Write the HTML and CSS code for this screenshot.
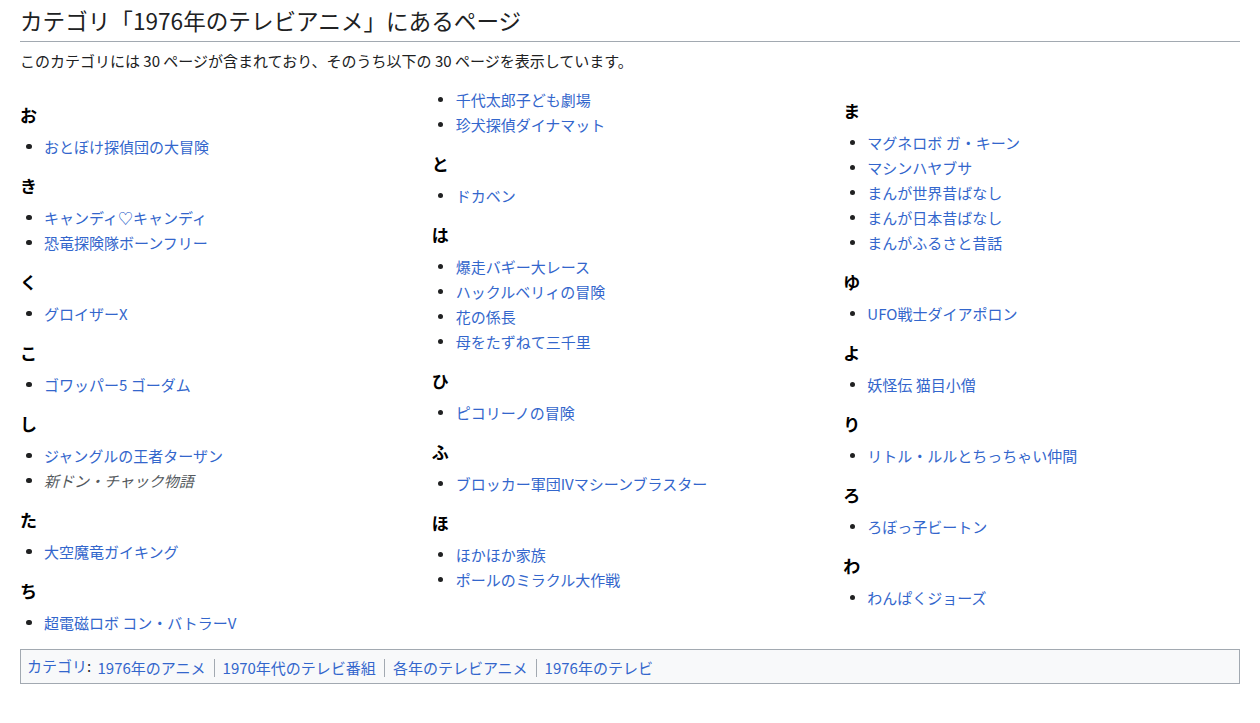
FILE: index.html
```html
<!DOCTYPE html>
<html lang="ja">
<head>
<meta charset="utf-8">
<title>カテゴリ「1976年のテレビアニメ」にあるページ</title>
<link rel="stylesheet" href="styles.css">
</head>
<body>
<div class="page">
  <h1 class="title">カテゴリ「1976年のテレビアニメ」にあるページ</h1>
  <p class="summary">このカテゴリには 30 ページが含まれており、そのうち以下の 30 ページを表示しています。</p>
  <div class="cols">
    <div class="col col1">
      <h3>お</h3>
      <ul><li><a href="#">おとぼけ探偵団の大冒険</a></li></ul>
      <h3>き</h3>
      <ul><li><a href="#">キャンディ♡キャンディ</a></li><li><a href="#">恐竜探険隊ボーンフリー</a></li></ul>
      <h3>く</h3>
      <ul><li><a href="#">グロイザーX</a></li></ul>
      <h3>こ</h3>
      <ul><li><a href="#">ゴワッパー5 ゴーダム</a></li></ul>
      <h3>し</h3>
      <ul><li><a href="#">ジャングルの王者ターザン</a></li><li><a href="#" class="redirect">新ドン・チャック物語</a></li></ul>
      <h3>た</h3>
      <ul><li><a href="#">大空魔竜ガイキング</a></li></ul>
      <h3>ち</h3>
      <ul><li><a href="#">超電磁ロボ コン・バトラーV</a></li></ul>
    </div>
    <div class="col col2">
      <ul><li><a href="#">千代太郎子ども劇場</a></li><li><a href="#">珍犬探偵ダイナマット</a></li></ul>
      <h3>と</h3>
      <ul><li><a href="#">ドカベン</a></li></ul>
      <h3>は</h3>
      <ul><li><a href="#">爆走バギー大レース</a></li><li><a href="#">ハックルベリィの冒険</a></li><li><a href="#">花の係長</a></li><li><a href="#">母をたずねて三千里</a></li></ul>
      <h3>ひ</h3>
      <ul><li><a href="#">ピコリーノの冒険</a></li></ul>
      <h3>ふ</h3>
      <ul><li><a href="#">ブロッカー軍団IVマシーンブラスター</a></li></ul>
      <h3>ほ</h3>
      <ul><li><a href="#">ほかほか家族</a></li><li><a href="#">ポールのミラクル大作戦</a></li></ul>
    </div>
    <div class="col col3">
      <h3>ま</h3>
      <ul><li><a href="#">マグネロボ ガ・キーン</a></li><li><a href="#">マシンハヤブサ</a></li><li><a href="#">まんが世界昔ばなし</a></li><li><a href="#">まんが日本昔ばなし</a></li><li><a href="#">まんがふるさと昔話</a></li></ul>
      <h3>ゆ</h3>
      <ul><li><a href="#">UFO戦士ダイアポロン</a></li></ul>
      <h3>よ</h3>
      <ul><li><a href="#">妖怪伝 猫目小僧</a></li></ul>
      <h3>り</h3>
      <ul><li><a href="#">リトル・ルルとちっちゃい仲間</a></li></ul>
      <h3>ろ</h3>
      <ul><li><a href="#">ろぼっ子ビートン</a></li></ul>
      <h3>わ</h3>
      <ul><li><a href="#">わんぱくジョーズ</a></li></ul>
    </div>
  </div>
  <div class="catlinks">
    <a href="#">カテゴリ</a>: <ul class="catlist"><li><a href="#">1976年のアニメ</a></li><li><a href="#">1970年代のテレビ番組</a></li><li><a href="#">各年のテレビアニメ</a></li><li><a href="#">1976年のテレビ</a></li></ul>
  </div>
</div>
</body>
</html>
```

FILE: styles.css
```css
html, body {
  margin: 0;
  padding: 0;
  background: #ffffff;
}
body {
  font-family: "Noto Sans CJK JP", "Noto Sans", sans-serif;
  font-size: 15px;
  color: #202122;
}
.page {
  padding: 0 20px;
}
a {
  color: #3366cc;
  text-decoration: none;
}
.title {
  margin: 6px 0 0 0;
  padding: 0 0 4px 0;
  font-size: 22.6px;
  font-weight: normal;
  line-height: 30.8px;
  color: #202122;
  border-bottom: 1px solid #a2a9b1;
}
.summary {
  margin: 8px 0 0 0;
  line-height: 22.4px;
}
.cols {
  display: grid;
  grid-template-columns: repeat(3, 1fr);
  column-gap: 15px;
  margin-top: 15px;
}
.col h3 {
  margin: 14px 0 6px 0;
  font-size: 17px;
  font-weight: bold;
  line-height: 26px;
  color: #000000;
}
.col1 h3:first-child {
  margin-top: 15px;
}
.col3 h3:first-child {
  margin-top: 11px;
}
.col ul {
  list-style: none;
  margin: 0;
  padding: 0;
}
.col li {
  display: flex;
  align-items: center;
  line-height: 25px;
  height: 25px;
}
.col li::before {
  content: "";
  flex: none;
  width: 5.5px;
  height: 5.5px;
  border-radius: 50%;
  background: #202122;
  margin-left: 6.25px;
  margin-right: 12.25px;
}
.col a.redirect {
  font-style: italic;
  color: #54595d;
}
.catlinks {
  margin-top: 14px;
  border: 1px solid #a2a9b1;
  background: #f8f9fa;
  padding: 5px 6px;
  line-height: 22.4px;
}
.catlist {
  display: inline;
  margin: 0;
  padding: 0;
  list-style: none;
}
.catlist li {
  display: inline-block;
  line-height: 18px;
  padding: 0 8px;
  border-left: 1px solid #a2a9b1;
  vertical-align: middle;
}
.catlist li:first-child {
  border-left: none;
  padding-left: 3px;
}
```
